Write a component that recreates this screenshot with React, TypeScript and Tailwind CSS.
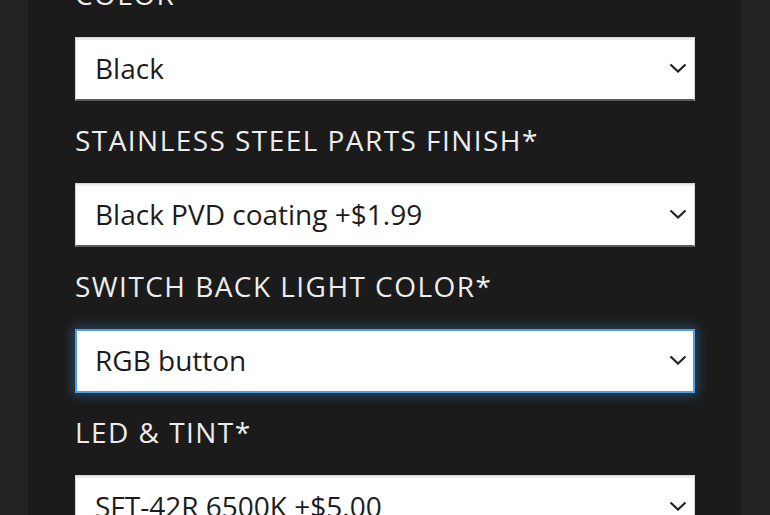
import React from "react";

const fields = [
  { label: "COLOR", value: "Black", focused: false },
  { label: "STAINLESS STEEL PARTS FINISH*", value: "Black PVD coating +$1.99", focused: false },
  { label: "SWITCH BACK LIGHT COLOR*", value: "RGB button", focused: true },
  { label: "LED & TINT*", value: "SFT-42R 6500K +$5.00", focused: false },
];

function Chevron() {
  return (
    <svg width="18" height="10" viewBox="0 0 18 10" className="shrink-0">
      <polyline points="1.5,1.5 9,8.5 16.5,1.5" fill="none" stroke="#222" strokeWidth="2.2" />
    </svg>
  );
}

export default function App() {
  return (
    <div
      className="w-[770px] h-[515px] overflow-hidden bg-[#232323] px-[28px]"
      style={{ fontFamily: '"Open Sans", "Liberation Sans", sans-serif' }}
    >
      <div className="flex h-full flex-col bg-[#1b1b1b] px-[47px]">
        <div className="-mt-[22px] flex flex-col gap-[23px]">
          {fields.map((f) => (
            <React.Fragment key={f.label}>
              <div className="h-[36px] text-[28px] leading-[33px] tracking-[1.45px] text-[#ededed] whitespace-nowrap">
                {f.label}
              </div>
              {f.focused ? (
                <div className="flex h-[64px] items-center justify-between bg-white border-2 border-[#4e9fe3] pl-[18px] pr-[6px] pb-[2px] shadow-[0_0_10px_3px_rgba(70,140,210,0.35)]">
                  <span className="text-[28px] text-[#1c1c1c] whitespace-nowrap">{f.value}</span>
                  <Chevron />
                </div>
              ) : (
                <div className="flex h-[64px] items-center justify-between bg-white border border-[#d4d4d4] border-b-[#5c5c5c] border-b-2 pl-[19px] pr-[7px] pb-[2px] shadow-[inset_0_2px_0_#ececec]">
                  <span className="text-[28px] text-[#1c1c1c] whitespace-nowrap">{f.value}</span>
                  <Chevron />
                </div>
              )}
            </React.Fragment>
          ))}
        </div>
      </div>
    </div>
  );
}
